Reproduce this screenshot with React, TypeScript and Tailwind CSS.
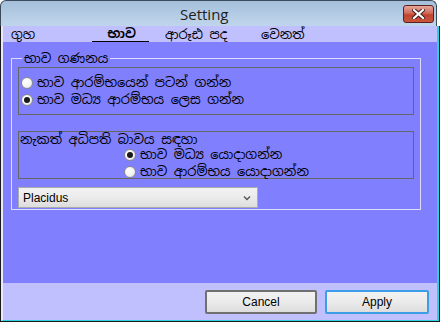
import React from "react";

const SI = "font-['Noto_Sans_Sinhala','Iskoola_Pota','Noto_Sans',sans-serif]";

function Radio({ checked }: { checked?: boolean }) {
  return (
    <span className="inline-flex h-[12px] w-[12px] shrink-0 items-center justify-center rounded-full border border-[#8a8a8a] bg-[radial-gradient(circle_at_40%_35%,#ffffff_0%,#f4f4f4_55%,#d8d8d8_100%)]">
      {checked ? <span className="h-[6px] w-[6px] rounded-full bg-[#1a1a1a]" /> : null}
    </span>
  );
}

function RadioRow({ checked, label }: { checked?: boolean; label: string }) {
  return (
    <div className="flex h-[17px] items-center gap-[4px]">
      <Radio checked={checked} />
      <span className={`${SI} text-[13px] leading-none text-black`}>{label}</span>
    </div>
  );
}

export default function App() {
  return (
    <div className="relative h-[322px] w-[440px] overflow-hidden bg-white">
      <div className="flex h-[322px] w-[440px] flex-col">
        {/* Title bar */}
        <div className="relative flex h-[26px] w-[437px] shrink-0 items-center rounded-tl-[6px] rounded-tr-[6px] border-l border-r border-t border-[#3c4a5c] bg-[linear-gradient(180deg,#a5bfda_0%,#b3cbe4_50%,#bfd5ec_100%)]">
          <span className="ml-[179px] mt-[2px] font-['Open_Sans','Noto_Sans',sans-serif] text-[15px] leading-none text-[#1e1e1e]">
            Setting
          </span>
          <div className="absolute right-[2px] top-[4px] flex h-[18px] w-[31px] items-center justify-center rounded-[3px] border border-[#5a2020] bg-[linear-gradient(180deg,#e7a79b_0%,#d06a58_45%,#c0432e_55%,#c9553c_100%)]">
            <svg width="13" height="10" viewBox="0 0 13 10">
              <path d="M2 1 L11 9 M11 1 L2 9" stroke="#3a1a1a" strokeWidth="4" strokeLinecap="square" />
              <path d="M2 1 L11 9 M11 1 L2 9" stroke="#ffffff" strokeWidth="2.2" strokeLinecap="square" />
            </svg>
          </div>
        </div>

        {/* Client area */}
        <div className="flex flex-1 flex-col border-b border-l border-r border-b-[#1a1a1a] border-l-[#1a1a1a] border-r-[#1a1a1a]">
          <div className="flex flex-1 flex-col border-b border-l-2 border-r-2 border-b-[#2fd0e0] border-l-[#e8e8ff] border-r-[#2fd0e0] bg-[#c0c0ff]">
            {/* Tabs */}
            <div className={`${SI} flex h-[16px] shrink-0 items-center text-[13px] leading-none text-black`}>
              <div className="w-[89px] pl-[8px]">ගුහ</div>
              <div className="flex h-[16px] w-[57px] items-center justify-center border-b border-black pl-[2px] font-bold">
                භාව
              </div>
              <div className="w-[112px] pl-[16px]">ආරූඪ පද</div>
              <div className="pl-[0px]">වෙනත්</div>
            </div>

            {/* Main panel */}
            <div className="h-[241px] shrink-0 bg-[#8080ff] pl-[8px] pr-[16px] pt-[10px]">
              <fieldset className="h-[158px] border border-[#dcdcff] px-[6px] pb-0 pt-0">
                <legend className={`${SI} ml-[4px] px-[2px] text-[13px] leading-none text-black`}>
                  භාව ගණනය
                </legend>
                <div className="mt-[2px] flex h-[48px] flex-col border border-[#666666] pl-[2px] pt-[6px]">
                  <RadioRow label="භාව ආරම්භයෙන් පටන් ගන්න" />
                  <RadioRow checked label="භාව මධ්‍ය ආරම්භය ලෙස ගන්න" />
                </div>
                <div className="mt-[16px] flex h-[48px] flex-col border border-[#666666] pt-[1px]">
                  <div className={`${SI} flex h-[16px] items-center pl-[1px] text-[13px] leading-none text-black`}>
                    නැකත් අධිපති බාවය සඳහා
                  </div>
                  <div className="pl-[105px]">
                    <RadioRow checked label="භාව මධ්‍ය යොදාගන්න" />
                    <RadioRow label="භාව ආරම්භය යොදාගන්න" />
                  </div>
                </div>
                <div className="mt-[8px] flex h-[21px] w-[240px] items-center justify-between border border-[#acacac] bg-[linear-gradient(180deg,#f2f2f2_0%,#ebebeb_50%,#dddddd_100%)] pl-[4px] pr-[6px]">
                  <span className="font-['Liberation_Sans',sans-serif] text-[12px] leading-none text-black">
                    Placidus
                  </span>
                  <svg width="8" height="6" viewBox="0 0 8 6">
                    <path d="M1 1.5 L4 4.5 L7 1.5" stroke="#555" strokeWidth="1.4" fill="none" />
                  </svg>
                </div>
              </fieldset>
            </div>

            {/* Buttons */}
            <div className="flex flex-1 items-start justify-end gap-[8px] pr-[8px] pt-[7px]">
              <button className="flex h-[24px] w-[112px] items-center justify-center rounded-[2px] border-2 border-[#707070] bg-[linear-gradient(180deg,#f2f2f2_0%,#ebebeb_50%,#dddddd_100%)] font-['Liberation_Sans',sans-serif] text-[12px] text-black">
                Cancel
              </button>
              <button className="flex h-[24px] w-[104px] items-center justify-center rounded-[2px] border-2 border-[#3c9ee8] bg-[linear-gradient(180deg,#f2f2f2_0%,#ebebeb_50%,#dddddd_100%)] font-['Liberation_Sans',sans-serif] text-[12px] text-black">
                Apply
              </button>
            </div>
          </div>
        </div>
      </div>
    </div>
  );
}
